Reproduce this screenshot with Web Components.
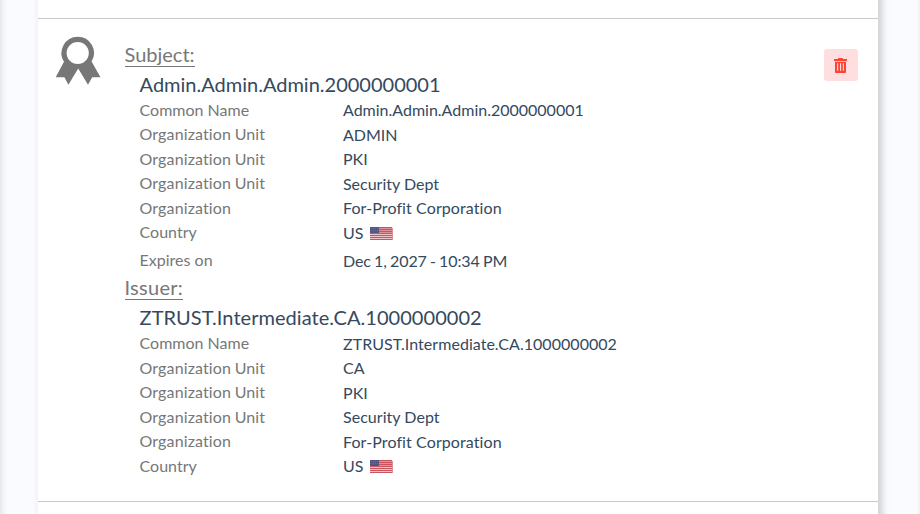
<!DOCTYPE html>
<html lang="en"><head><meta charset="utf-8"><title>Certificates</title>
<style>html,body{margin:0;height:514px;overflow:hidden;background:#fafbff;font-family:Lato,sans-serif}</style></head>
<body><cert-page></cert-page>
<script>
const define=(name,html,setup)=>customElements.define(name,class extends HTMLElement{
  connectedCallback(){
    if(this.shadowRoot)return;
    const t=document.createElement('template');t.innerHTML=html;
    this.attachShadow({mode:'open'}).append(t.content.cloneNode(true));
    if(setup)setup(this,this.shadowRoot);
  }
});
define('award-icon',`<style>:host{display:block;width:46px;height:50px}svg{display:block}</style>
<svg width="46" height="50" viewBox="55 36 46 50"><path fill="#777" fill-rule="evenodd" d="M77.7 36.7a16.3 16.3 0 0 1 13.9 24.8l8.9 15.7h-8.3L88 84.8l-9.8-16.2-9.8 16.2-4-7.6h-8.7L64 61.7A16.3 16.3 0 0 1 77.7 36.7zm0 5.2a11.1 11.1 0 1 0 0 22.2a11.1 11.1 0 0 0 0-22.2z"/></svg>`);
define('delete-button',`<style>:host{display:block;width:34px;height:32px}button{display:flex;align-items:center;justify-content:center;width:34px;height:32px;padding:0;border:0;border-radius:3px;background:#ffdedf}svg{display:block}</style>
<button aria-label="Delete"><svg width="14" height="16" viewBox="0 0 14 16"><path fill="#ff4236" d="M4.1 1h4.7v1H13v2H0V2h4.1z"/><path fill="#ff4236" fill-rule="evenodd" d="M1 4.7h11V15.2q0 .8-.8.8H1.8Q1 16 1 15.2zM3.1 6.3v7.5h1.1V6.3zm2.9 0v7.5h1.1V6.3zm2.8 0v7.5h1.1V6.3z"/></svg></button>`);
define('flag-us',`<style>:host{display:block;width:24px;height:13px}svg{display:block}</style>
<svg width="24" height="13" viewBox="0 0 24 13" shape-rendering="crispEdges"><path fill="#df9096" d="M.5.5h23v12H.5z"/><path stroke="#c9555f" d="M1 .5h22M1 2.5h22M1 4.5h22M1 6.5h22M1 8.5h22M1 10.5h22M1 12.5h22"/><path stroke="#eec5c9" d="M1 7.5h22M1 9.5h22M1 11.5h22"/><path fill="#535781" d="M1 0h9v6H1z"/><path stroke="#666a92" d="M2 1.5h7M2 3.5h7" stroke-dasharray="1 1"/></svg>`);
define('cert-field',`<style>:host{display:grid;grid-template-columns:203.4px 1fr;height:24.5px;font-size:16px;line-height:24px}.k{color:#777;letter-spacing:0;word-spacing:0}:host([label^=Organ]) .k{letter-spacing:.12px;word-spacing:-.6px}.v{display:flex;color:#34495e;padding-top:.6px;white-space:nowrap}::slotted(flag-us){margin:6px 0 0 5.9px}</style>
<span class="k"></span><span class="v"><slot></slot></span>`,(el,r)=>{r.querySelector('.k').textContent=el.getAttribute('label')});
define('cert-section',`<style>:host{display:block}h3,h4{font-weight:400;margin:0}h3{width:max-content;font-size:20px;line-height:22px;padding-bottom:1px;color:#777;border-bottom:1px solid #777}:host(.issuer) h3{letter-spacing:.28px}h4{font-size:20px;line-height:24px;color:#34495e;margin:5px 0 1.9px}.body{padding-left:15.1px}</style>
<h3></h3><div class="body"><h4></h4><slot></slot></div>`,(el,r)=>{r.querySelector('h3').textContent=el.getAttribute('heading');r.querySelector('h4').textContent=el.getAttribute('name')});
define('cert-card',`<style>:host{display:grid;box-sizing:border-box;grid-template-columns:69.5px 1fr 34px;height:483px;border-bottom:1px solid #c9c9c9;padding:17px 20px 0 17px}.info{padding-top:7px}.actions{padding-top:13px}</style>
<award-icon></award-icon><div class="info"><slot></slot></div><div class="actions"><delete-button></delete-button></div>`);
define('cert-page',`<style>:host{display:flex;height:514px;box-sizing:border-box}.left{width:38px;background:linear-gradient(90deg,#e7e8e9 0,#f2f3f5 3px,#f9fafd 7px,#fafbff 10px,#fafbff 33px,#f3f4f7 38px)}.panel{width:840px;background:#fff}.top{height:18px;border-bottom:1px solid #c9c9c9}.right{width:40px;background:linear-gradient(90deg,#d5d5d7 0,#dedfe1 3px,#edeef1 6px,#f7f8fb 9px,#fafbff 12px)}.track{width:2px;background:#f3f3f3}.expires{height:27.9px;letter-spacing:-.1px;word-spacing:-.75px}.country{height:28px}.corp{letter-spacing:.1px}.issuer{letter-spacing:.04px}</style>
<div class="left"></div><main class="panel"><div class="top"></div><cert-card>
<cert-section heading="Subject:" name="Admin.Admin.Admin.2000000001">
<cert-field label="Common Name">Admin.Admin.Admin.2000000001</cert-field>
<cert-field label="Organization Unit">ADMIN</cert-field>
<cert-field label="Organization Unit">PKI</cert-field>
<cert-field label="Organization Unit">Security Dept</cert-field>
<cert-field class="corp" label="Organization">For-Profit Corporation</cert-field>
<cert-field class="country" label="Country">US<flag-us></flag-us></cert-field>
<cert-field class="expires" label="Expires on">Dec 1, 2027 - 10:34 PM</cert-field></cert-section>
<cert-section class="issuer" heading="Issuer:" name="ZTRUST.Intermediate.CA.1000000002">
<cert-field label="Common Name">ZTRUST.Intermediate.CA.1000000002</cert-field>
<cert-field label="Organization Unit">CA</cert-field>
<cert-field label="Organization Unit">PKI</cert-field>
<cert-field label="Organization Unit">Security Dept</cert-field>
<cert-field class="corp" label="Organization">For-Profit Corporation</cert-field>
<cert-field label="Country">US<flag-us></flag-us></cert-field></cert-section>
</cert-card></main><div class="right"></div><div class="track"></div>`);
</script></body></html>
